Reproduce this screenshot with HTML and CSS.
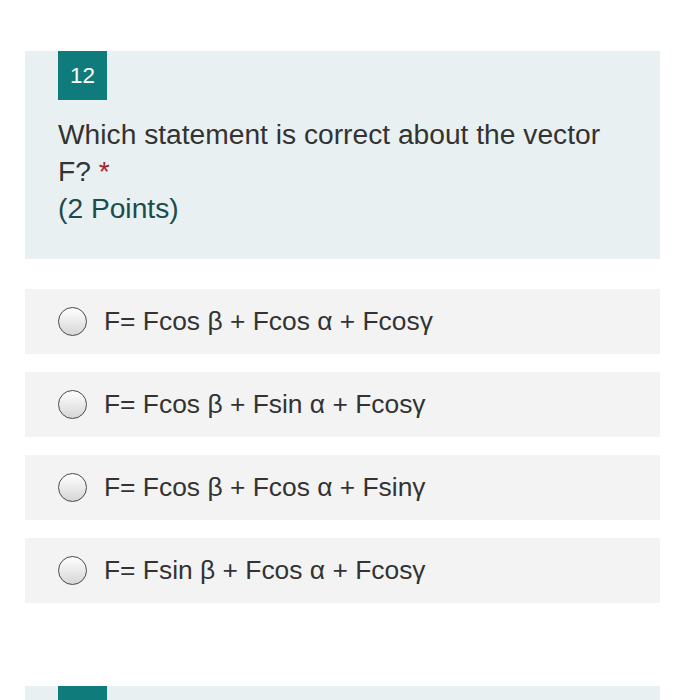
FILE: index.html
```html
<!DOCTYPE html>
<html>
<head>
<meta charset="utf-8">
<link rel="stylesheet" href="styles.css">
</head>
<body>
<div class="page">
  <div class="question">
    <div class="qnum">12</div>
    <div class="qtext">Which statement is correct about the vector F? <span class="req">*</span></div>
    <div class="points">(2 Points)</div>
  </div>
  <div class="options">
    <label class="option"><span class="radio"></span><span class="otext">F= Fcos β + Fcos α + Fcosγ</span></label>
    <label class="option"><span class="radio"></span><span class="otext">F= Fcos β + Fsin α + Fcosγ</span></label>
    <label class="option"><span class="radio"></span><span class="otext">F= Fcos β + Fcos α + Fsinγ</span></label>
    <label class="option"><span class="radio"></span><span class="otext">F= Fsin β + Fcos α + Fcosγ</span></label>
  </div>
  <div class="question next">
    <div class="qnum"></div>
  </div>
</div>
</body>
</html>
```
FILE: styles.css
```css
html, body {
  margin: 0;
  padding: 0;
  background: #ffffff;
  overflow: hidden;
}
.page {
  width: 635px;
  margin-left: 25px;
  padding-top: 51px;
  font-family: "Liberation Sans", Arial, sans-serif;
}
.question {
  background: #e8f0f2;
  padding: 0 33px;
  height: 208px;
  box-sizing: border-box;
}
.qnum {
  width: 49px;
  height: 49px;
  background: #0f7b7b;
  color: #ffffff;
  font-size: 22.5px;
  display: flex;
  align-items: center;
  justify-content: center;
}
.qtext {
  margin-top: 16px;
  font-size: 28.2px;
  line-height: 37px;
  color: #333333;
  width: 560px;
}
.req {
  color: #a4262c;
}
.points {
  font-size: 28.2px;
  line-height: 37px;
  color: #1d4b4b;
}
.options {
  margin-top: 30px;
  display: flex;
  flex-direction: column;
  gap: 18px;
}
.option {
  height: 65px;
  background: #f3f3f3;
  display: flex;
  align-items: center;
  padding-left: 33px;
}
.radio {
  width: 27px;
  height: 27px;
  border: 1.5px solid #4a4a4a;
  border-radius: 50%;
  background: linear-gradient(#ffffff, #d6d6d6);
  flex: none;
}
.otext {
  margin-left: 17px;
  font-size: 26.4px;
  color: #333333;
}
.next {
  margin-top: 83px;
}
```
